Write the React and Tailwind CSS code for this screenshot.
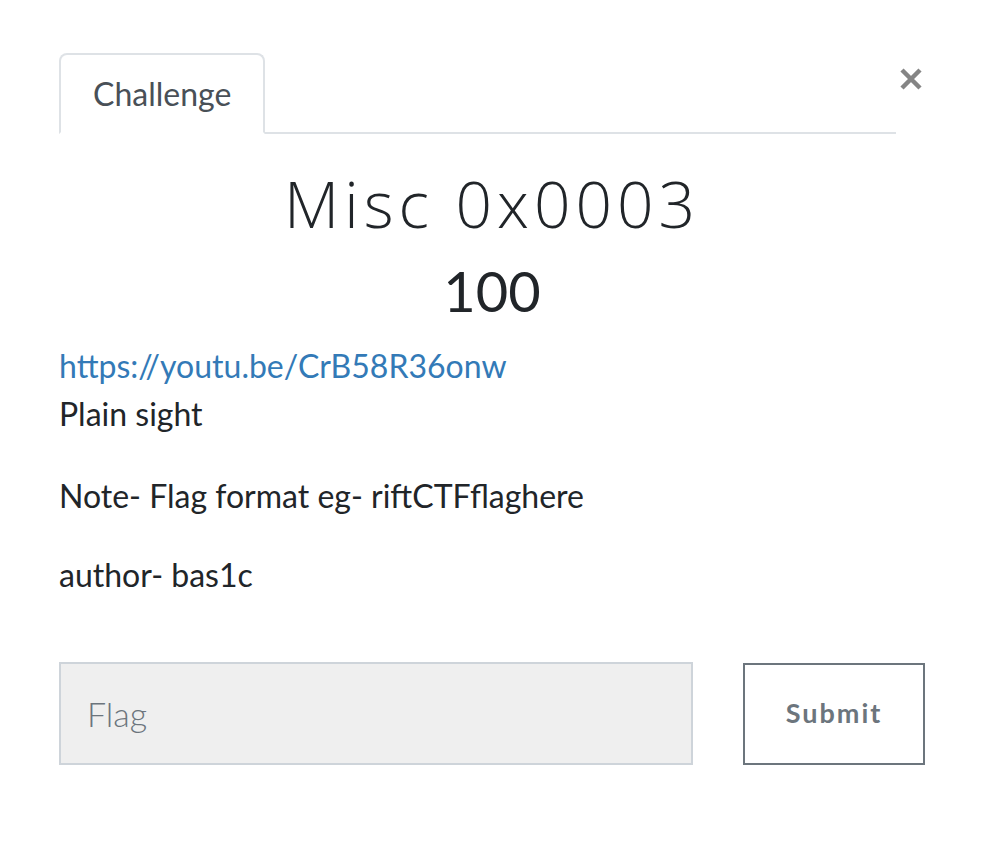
export default function App() {
  return (
    <div className="w-[984px] h-[860px] bg-white font-['Lato',sans-serif] text-[#212529]">
      {/* HEADER / TABS */}
      <div className="flex items-start pl-[59px] pr-[61px] pt-[53px]">
        <div className="flex-1 flex border-b-2 border-[#dee2e6]">
          <div className="-mb-[2px] bg-white border-2 border-[#dee2e6] border-b-white rounded-t-[8px] px-[32px] pt-[22px] pb-[22px] text-[32px] leading-[33px] text-[#495057]">
            Challenge
          </div>
        </div>
        <button className="mt-[14px] ml-[3px] w-[24px] h-[24px] flex items-center justify-center">
          <svg width="24" height="24" viewBox="0 0 24 24">
            <path d="M3 3 L21 21 M21 3 L3 21" stroke="#858585" strokeWidth="4.5" strokeLinecap="butt" />
          </svg>
        </button>
      </div>

      {/* BODY */}
      <div className="px-[59px]">
        <h2 className="mt-[31px] text-center font-['Open_Sans',sans-serif] font-light text-[64px] leading-[78px] tracking-[5px]">
          Misc 0x0003
        </h2>
        <h3 className="mt-[15px] text-center text-[56px] leading-[66px]">100</h3>

        <div className="mt-[18px] text-[32px] leading-[48px]">
          <a href="#" className="text-[#337ab7] block">https://youtu.be/CrB58R36onw</a>
          <p>Plain sight</p>
          <p className="mt-[34px]">Note- Flag format eg- riftCTFflaghere</p>
          <p className="mt-[31px]">author- bas1c</p>
        </div>

        {/* FORM */}
        <div className="mt-[63px] flex items-center gap-[50px]">
          <input
            className="flex-1 h-[103px] bg-[#efefef] border-2 border-[#ced4da] px-[26px] text-[34px] font-light text-[#495057] placeholder:text-[#6c757d] outline-none"
            placeholder="Flag"
          />
          <button className="w-[182px] h-[102px] border-2 border-[#6c757d] text-[#6c757d] text-[27px] font-bold tracking-[2px]">
            Submit
          </button>
        </div>
      </div>
    </div>
  );
}
